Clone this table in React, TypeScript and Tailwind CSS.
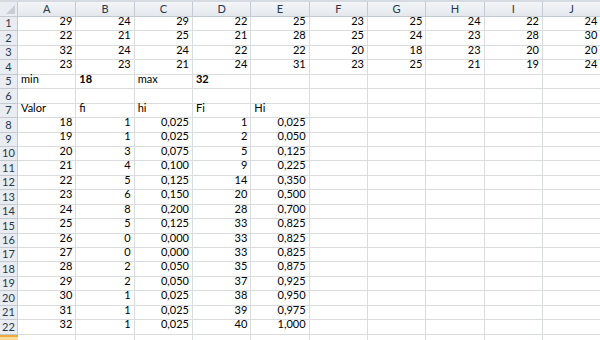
import React from 'react';

const cols = ['A', 'B', 'C', 'D', 'E', 'F', 'G', 'H', 'I', 'J'];

type Cell = { v: string; left?: boolean; bold?: boolean };

const n = (v: string | number): Cell => ({ v: String(v) });
const t = (v: string, bold = false): Cell => ({ v, left: true, bold });

const top: number[][] = [
  [29, 24, 29, 22, 25, 23, 25, 24, 22, 24],
  [22, 21, 25, 21, 28, 25, 24, 23, 28, 30],
  [32, 24, 24, 22, 22, 20, 18, 23, 20, 20],
  [23, 23, 21, 24, 31, 23, 25, 21, 19, 24],
];

const freq: [number, number, string, number, string][] = [
  [18, 1, '0,025', 1, '0,025'],
  [19, 1, '0,025', 2, '0,050'],
  [20, 3, '0,075', 5, '0,125'],
  [21, 4, '0,100', 9, '0,225'],
  [22, 5, '0,125', 14, '0,350'],
  [23, 6, '0,150', 20, '0,500'],
  [24, 8, '0,200', 28, '0,700'],
  [25, 5, '0,125', 33, '0,825'],
  [26, 0, '0,000', 33, '0,825'],
  [27, 0, '0,000', 33, '0,825'],
  [28, 2, '0,050', 35, '0,875'],
  [29, 2, '0,050', 37, '0,925'],
  [30, 1, '0,025', 38, '0,950'],
  [31, 1, '0,025', 39, '0,975'],
  [32, 1, '0,025', 40, '1,000'],
];

const rows: Cell[][] = [
  ...top.map((r) => r.map(n)),
  [t('min'), t('18', true), t('max'), t('32', true)],
  [],
  [t('Valor'), t('fi'), t('hi'), t('Fi'), t('Hi')],
  ...freq.map((r) => r.map(n)),
  [],
];

const App: React.FC = () => {
  return (
    <div className="w-[600px] h-[340px] overflow-hidden bg-white text-[11px] text-black" style={{ fontFamily: 'Lato, "Liberation Sans", sans-serif' }}>
      <div className="h-[2px] bg-[#d6dbe2]" />
      <div className="grid grid-cols-[18px_repeat(10,58.33px)] grid-rows-[15px] auto-rows-[14.45px]">
        {/* header row */}
        <div className="relative bg-[#e9ecf0] border-r border-b border-[#c4cad2]">
          <svg className="absolute right-[2px] bottom-[2px]" width="9" height="9" viewBox="0 0 9 9">
            <path d="M9 0 L9 9 L0 9 Z" fill="#c9ced6" />
          </svg>
        </div>
        {cols.map((c) => (
          <div key={c} className="flex items-center justify-center bg-gradient-to-b from-[#f3f5f8] to-[#e4e8ed] border-r border-b border-[#c4cad2] text-[#26384f]">
            {c}
          </div>
        ))}
        {rows.map((r, i) => (
          <React.Fragment key={i}>
            {i === 22 ? (
              <div className="bg-[#f8dca0] border-t-2 border-[#f2a93b]" />
            ) : (
              <div className="flex items-center justify-center bg-[#e9ecf0] border-r border-b border-[#c4cad2] text-[#26384f]">
                {i + 1}
              </div>
            )}
            {cols.map((c, j) => {
              const cell = r[j];
              return (
                <div
                  key={c}
                  className={`flex items-end pb-[1px] px-[3px] border-r border-b border-[#dadcdf] whitespace-nowrap ${
                    cell && cell.left ? 'justify-start' : 'justify-end'
                  } ${cell && cell.bold ? 'font-bold' : ''}`}
                >
                  {cell ? cell.v : ''}
                </div>
              );
            })}
          </React.Fragment>
        ))}
      </div>
    </div>
  );
};

export default App;
